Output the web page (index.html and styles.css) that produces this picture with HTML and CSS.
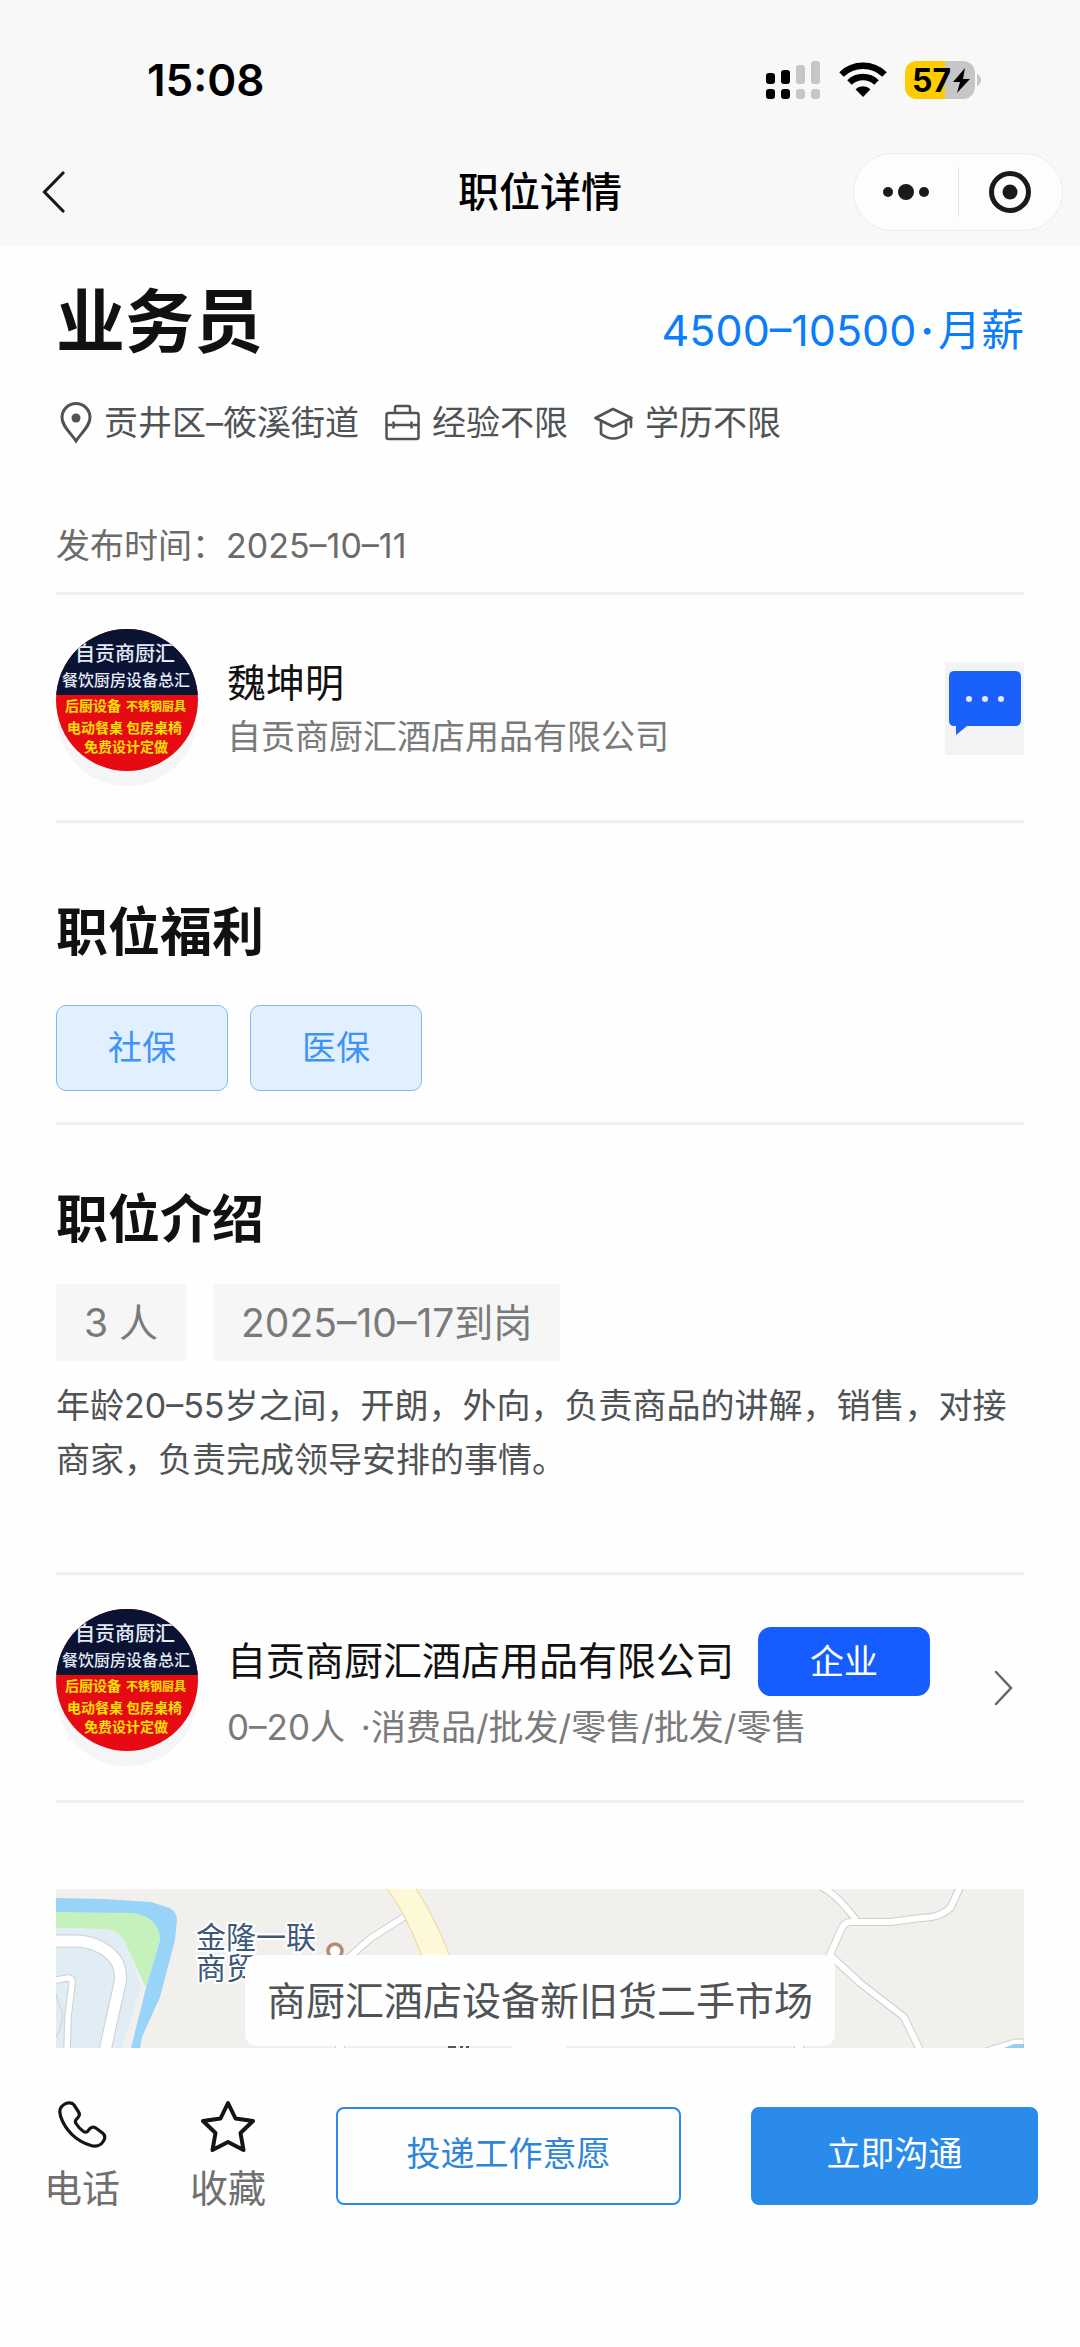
FILE: index.html
```html
<!DOCTYPE html>
<html lang="zh-CN">
<head>
<meta charset="utf-8">
<meta name="viewport" content="width=device-width, initial-scale=1">
<title>职位详情</title>
<link rel="stylesheet" href="styles.css">
</head>
<body>
<svg class="defs" width="0" height="0" aria-hidden="true">
  <symbol id="shop-logo" viewBox="0 0 142 142">
    <clipPath id="disc"><circle cx="71" cy="71" r="71"/></clipPath>
    <g clip-path="url(#disc)">
      <rect width="142" height="142" fill="#e60b12"/>
      <rect width="142" height="66" fill="#0b1334"/>
      <g fill="#e4ebf7" font-weight="500">
        <text x="19" y="32" font-size="20">自贡商厨汇</text>
        <text x="6" y="57" font-size="16">餐饮厨房设备总汇</text>
      </g>
      <g fill="#ffe200" font-size="14" font-weight="700">
        <text x="9" y="82">后厨设备</text>
        <text x="70" y="82" font-size="12">不锈钢厨具</text>
        <text x="11" y="104">电动餐桌</text>
        <text x="70" y="104">包房桌椅</text>
        <text x="28" y="123">免费设计定做</text>
      </g>
    </g>
  </symbol>
</svg>
<div class="page">
  <header class="top">
    <div class="status">
      <span class="clock">15:08</span>
      <div class="status-icons">
        <svg width="55" height="38" viewBox="0 0 55 38" aria-hidden="true">
          <g fill="#000"><rect x="0" y="12" width="9" height="11" rx="3"/><rect x="15" y="9" width="9" height="14" rx="3"/><rect x="0" y="28" width="9" height="10" rx="3"/><rect x="15" y="28" width="9" height="10" rx="3"/></g>
          <g fill="#c6c6c6"><rect x="30" y="4" width="9" height="19" rx="3"/><rect x="45" y="0" width="9" height="23" rx="3"/><rect x="30" y="28" width="9" height="10" rx="3"/><rect x="45" y="28" width="9" height="10" rx="3"/></g>
        </svg>
        <svg width="48" height="36" viewBox="0 0 48 36" aria-hidden="true">
          <g fill="none" stroke="#000" stroke-width="6.5"><path d="M2.5 12.5a31 31 0 0 1 43 0"/><path d="M10.500 20.500a19.500 19.500 0 0 1 27 0"/></g>
          <path d="M24 35l7.500-7.800a10.800 10.800 0 0 0-15 0z"/>
        </svg>
        <svg width="76" height="38" viewBox="0 0 76 38" role="img" aria-label="电量 57%">
          <clipPath id="cell"><rect width="70" height="38" rx="12"/></clipPath>
          <g clip-path="url(#cell)"><rect width="70" height="38" fill="#c6c6c6"/><rect width="40" height="38" fill="#fc0"/></g>
          <path d="M72 13q4 2 4 6t-4 6z" fill="#c6c6c6"/>
          <text class="battery-text" x="7" y="31">57</text>
          <path d="M60 7L48 21h7l-3 11 13-14h-7z"/>
        </svg>
      </div>
    </div>
    <nav class="nav">
      <button class="back" aria-label="返回">
        <svg width="24" height="42" viewBox="0 0 24 42" fill="none" stroke="#1a1a1a" stroke-width="3.200" stroke-linecap="round"><path d="M21 2L2.500 21 21 40"/></svg>
      </button>
      <h1 class="nav-title">职位详情</h1>
      <div class="capsule">
        <button class="capsule-btn" aria-label="更多">
          <svg width="48" height="20" viewBox="0 0 48 20" fill="#1a1a1a"><circle cx="6" cy="10" r="5"/><circle cx="24" cy="10" r="8"/><circle cx="42" cy="10" r="5"/></svg>
        </button>
        <button class="capsule-btn" aria-label="关闭">
          <svg width="44" height="44" viewBox="0 0 44 44"><circle cx="22" cy="22" r="18.500" fill="none" stroke="#1a1a1a" stroke-width="5"/><circle cx="22" cy="22" r="7.500" fill="#1a1a1a"/></svg>
        </button>
      </div>
    </nav>
  </header>

  <main class="content">
    <section class="summary">
      <div class="job-head">
        <h2 class="job-title">业务员</h2>
        <span class="salary">4500–10500<b class="dot">·</b>月薪</span>
      </div>
      <ul class="facts">
        <li>
          <svg width="32" height="42" viewBox="0 0 32 42" fill="none" stroke="#4f5355" stroke-width="3"><path d="M16 39C10 30 2 24 2 15.500a14 14 0 0 1 28 0C30 24 22 30 16 39z"/><circle cx="16" cy="16" r="4.500" fill="#4f5355" stroke="none"/></svg>
          <span>贡井区–筱溪街道</span>
        </li>
        <li>
          <svg width="35" height="42" viewBox="0 0 35 42" fill="none" stroke="#4f5355" stroke-width="2.500"><rect x="1.500" y="11" width="32" height="26" rx="2"/><path d="M10 11V6q0-2 2-2h11q2 0 2 2v5M1.500 23H7m2.500 0h16m2.500 0h5.500M8.500 19.500v7m18-7v7"/></svg>
          <span>经验不限</span>
        </li>
        <li>
          <svg width="39" height="42" viewBox="0 0 39 42" fill="none" stroke="#4f5355" stroke-width="2.600" stroke-linejoin="round" stroke-linecap="round"><path d="M1.500 16L19 7l18.500 9L19 24.500zM7 19v13q12 9 25 0V19M37 16v9"/></svg>
          <span>学历不限</span>
        </li>
      </ul>
      <p class="published">发布时间：<time>2025–10–11</time></p>
    </section>

    <section class="person">
      <svg class="avatar" width="142" height="158" viewBox="0 0 142 158" role="img" aria-label="商家头像"><circle cx="71" cy="87" r="70" fill="#f3f5f6"/><use href="#shop-logo" width="142" height="142"/></svg>
      <div class="person-text">
        <h3 class="name">魏坤明</h3>
        <p class="sub">自贡商厨汇酒店用品有限公司</p>
      </div>
      <button class="chat" aria-label="聊天">
        <svg width="79" height="93" viewBox="0 0 79 93"><path d="M9 9h61q6 0 6 6v43q0 6-6 6H22L11 73V64H9q-5 0-5-6V15q0-6 5-6z" fill="#1a60fb"/><g fill="#e3ecff"><circle cx="24" cy="37" r="3"/><circle cx="40" cy="37" r="3"/><circle cx="56" cy="37" r="3"/></g></svg>
      </button>
    </section>

    <section class="benefits">
      <h2 class="heading">职位福利</h2>
      <ul class="tags"><li>社保</li><li>医保</li></ul>
    </section>

    <section class="intro">
      <h2 class="heading">职位介绍</h2>
      <ul class="chips"><li>3 人</li><li>2025–10–17到岗</li></ul>
      <p class="description">年龄20–55岁之间，开朗，外向，负责商品的讲解，销售，对接商家，负责完成领导安排的事情。</p>
    </section>

    <a class="person" href="#company">
      <svg class="avatar" width="142" height="158" viewBox="0 0 142 158" role="img" aria-label="公司头像"><circle cx="71" cy="87" r="70" fill="#f3f5f6"/><use href="#shop-logo" width="142" height="142"/></svg>
      <div class="person-text">
        <div class="company-row"><h3 class="name">自贡商厨汇酒店用品有限公司</h3><span class="badge">企业</span></div>
        <p class="sub company-sub"><span class="headcount">0–20人</span> ·消费品/批发/零售/批发/零售</p>
      </div>
      <svg class="arrow" width="20" height="36" viewBox="0 0 20 36" fill="none" stroke="#666" stroke-width="2.500" stroke-linecap="round"><path d="M2 2l15 16L2 34"/></svg>
    </a>

    <section class="map" aria-label="工作地点">
      <svg class="map-art" viewBox="0 0 968 159" preserveAspectRatio="xMidYMid slice">
        <rect width="968" height="159" fill="#f1f0ed"/>
        <path d="M0 23H78Q103 25 104 50L90 99 71 58Q64 40 47 40L0 39z" fill="#c5f1bd"/>
        <path d="M0 39l47 1Q64 40 71 58l14 38-19 63H0z" fill="#e0edf5"/>
        <path d="M0 9l47 1 48 3 19 6q7 5 7 12l-2 20-15 57-18 40-2 11H75l15-60 14-48q0-22-26-27L0 23z" fill="#98d4f8"/>
        <g fill="none" stroke="#cfcfcf" stroke-linejoin="round">
          <path d="M0 104q2 12 6 18 2 14-6 26"/>
          <path d="M0 52h22q24 2 37 18 7 10 5 24l-9 40-6 28" stroke-width="13"/>
          <path d="M0 91l12-2q5 0 4 6l-4 33-1 34" stroke-width="7.500"/>
          <path d="M348 28l-33 21-24 21" stroke-width="8"/>
          <path d="M766-2q16 9 34 33" stroke-width="8"/>
          <path d="M904-2l-9 20q-10 11-31 11l-29 4h-40q-7 0-10 8l-12 27" stroke-width="8"/>
          <path d="M774 66l30 28 44 34 16 33" stroke-width="8"/>
          <path d="M284 150v12M743 150v12" stroke-width="10"/>
        </g>
        <g fill="none" stroke="#fff" stroke-linejoin="round">
          <path d="M0 52h22q24 2 37 18 7 10 5 24l-9 40-6 28" stroke-width="11"/>
          <path d="M0 91l12-2q5 0 4 6l-4 33-1 34" stroke-width="5.500"/>
          <path d="M348 28l-33 21-24 21" stroke-width="6"/>
          <path d="M766-2q16 9 34 33" stroke-width="6"/>
          <path d="M904-2l-9 20q-10 11-31 11l-29 4h-40q-7 0-10 8l-12 27" stroke-width="6"/>
          <path d="M774 66l30 28 44 34 16 33" stroke-width="6"/>
          <path d="M284 150v12M743 150v12" stroke-width="8"/>
        </g>
        <path d="M330-2q22 30 36 70h28Q382 34 359-2z" fill="#fcf8d8" stroke="#f3d38e"/>
        <path d="M926 160l33-10h9v9z" fill="#fff" stroke="#ccc"/>
        <path d="M948 159l10-4h10v4z" fill="#98cdee"/>
        <path d="M456 159h54v-3h-54z" fill="#fff"/>
        <path d="M392 158h8m4 0h3m3 0h3" stroke="#555" stroke-width="2"/>
        <circle cx="279" cy="62" r="7" fill="#fff" stroke="#b48a78" stroke-width="3.500"/>
        <g class="map-label"><text x="140" y="59">金隆一联</text><text x="140" y="90">商贸</text></g>
      </svg>
      <p class="callout">商厨汇酒店设备新旧货二手市场</p>
    </section>
  </main>

  <footer class="actions">
    <button class="icon-action">
      <svg width="54" height="52" viewBox="0 0 54 52" fill="none" stroke="#151515" stroke-width="3.200" stroke-linejoin="round"><path d="M9 4.500C5 7 4 11 5.500 16 10 30 21 41 36 45.500c5 1.500 10 0 12.500-4.500 2-3 1.500-6-1-8l-6-4.500c-2.500-2-5-1.500-7 .5l-2 2.500c-1.500 1.200-2.500 1-4 0C25 29 22.500 26 21 23.500c-1-1.500-.8-2.800.2-4l1.800-2c1.700-2 1.700-4 .3-6l-4.300-6.500c-1.500-2.500-6.500-3-10-.5z"/></svg>
      <span>电话</span>
    </button>
    <button class="icon-action">
      <svg width="54" height="52" viewBox="0 0 54 52" fill="none" stroke="#151515" stroke-width="4" stroke-linejoin="round"><path d="M27 3l7.500 15.500L52 21 39.500 33l3 17L27 42l-15.500 8 3-17L2 21l17.500-2.500z"/></svg>
      <span>收藏</span>
    </button>
    <button class="btn btn-outline">投递工作意愿</button>
    <button class="btn btn-primary">立即沟通</button>
  </footer>
</div>
</body>
</html>
```

FILE: styles.css
```css
* { box-sizing: border-box; margin: 0; padding: 0; }

body {
  background: #fefefe;
  color: #4f5355;
  font-family: Inter, "Noto Sans CJK SC", sans-serif;
  font-size: 34px;
  line-height: 48px;
}

button {
  border: 0;
  background: none;
  color: inherit;
  font: inherit;
  cursor: pointer;
}

ul { list-style: none; }
a { color: inherit; text-decoration: none; }
svg { display: block; flex: none; }
.defs { position: absolute; }

.page {
  display: flex;
  flex-direction: column;
  min-height: 100vh;
}

/* Status bar and navigation */
.top { background: #f8f8f8; }

.status {
  display: flex;
  align-items: center;
  justify-content: space-between;
  padding: 56px 99px 34px 147px;
}

.clock {
  color: #000;
  font-size: 44px;
  font-weight: 600;
}

.status-icons {
  display: flex;
  align-items: center;
  gap: 18px;
}

.battery-text {
  font-size: 32px;
  font-weight: 700;
}

.nav {
  display: grid;
  grid-template-columns: 1fr auto 1fr;
  align-items: center;
  height: 108px;
}

.back {
  justify-self: start;
  padding: 12px 0 12px 42px;
}

.nav-title {
  color: #000;
  font-size: 41px;
  font-weight: 500;
}

.capsule {
  display: flex;
  align-items: center;
  justify-self: end;
  width: 210px;
  height: 78px;
  margin-right: 17px;
  border: 1px solid #ececec;
  border-radius: 39px;
  background: #fdfdfd;
}

.capsule-btn {
  display: flex;
  flex: 1;
  align-items: center;
  justify-content: center;
  height: 50px;
}

.capsule-btn + .capsule-btn { border-left: 1px solid #e2e2e2; }

/* Job summary */
.content { padding: 36px 56px 0; }

.summary,
.person,
.benefits,
.intro { border-bottom: 3px solid #f0f0f0; }

.summary { padding-bottom: 22px; }

.job-head {
  display: flex;
  align-items: flex-end;
  justify-content: space-between;
}

.job-title {
  color: #111;
  font-size: 69px;
  font-weight: 700;
  line-height: 80px;
}

.salary {
  color: #0b7dfa;
  font-size: 43px;
  line-height: 64px;
}

.dot {
  margin: 0 4px;
  font-weight: 600;
}

.facts {
  display: flex;
  flex-wrap: wrap;
  gap: 26px;
  margin-top: 37px;
}

.facts li {
  display: flex;
  align-items: center;
  gap: 12px;
}

.facts li:first-child { padding-left: 4px; }

.published {
  margin-top: 75px;
  color: #6b6b6b;
}

/* Recruiter and company rows */
.person {
  display: flex;
  align-items: center;
  gap: 29px;
  padding: 34px 0 33px;
}

.person-text {
  flex: 1;
  padding-top: 4px;
}

.name {
  color: #111;
  font-size: 39px;
  font-weight: 400;
  line-height: 54px;
}

.sub {
  color: #7a7a7a;
  line-height: 54px;
}

.chat { background: #f2f3f5; }

.company-row {
  display: flex;
  align-items: center;
  gap: 24px;
}

.company-sub {
  margin-top: 4px;
  font-size: 35px;
}

.headcount { margin-right: 6px; }

.badge {
  flex: none;
  width: 172px;
  border-radius: 13px;
  background: #165dff;
  color: #fff;
  line-height: 69px;
  text-align: center;
}

.arrow { margin-right: 10px; }

/* Benefits and description */
.benefits { padding: 78px 0 31px; }
.intro { padding: 63px 0 85px; }

.heading {
  color: #111;
  font-size: 52px;
  font-weight: 700;
  line-height: 64px;
}

.tags {
  display: flex;
  gap: 22px;
  margin-top: 40px;
}

.tags li {
  width: 172px;
  border: 1px solid #7fb9f3;
  border-radius: 10px;
  background: #e1efff;
  color: #3c93f8;
  line-height: 84px;
  text-align: center;
}

.chips {
  display: flex;
  gap: 27px;
  margin-top: 32px;
}

.chips li {
  padding: 0 28px;
  border-radius: 3px;
  background: #f6f6f6;
  color: #7a7a7a;
  font-size: 39px;
  line-height: 77px;
}

.description {
  margin-top: 18px;
  line-height: 54px;
}

/* Map */
.map {
  position: relative;
  height: 159px;
  margin-top: 86px;
  overflow: hidden;
}

.map-art {
  width: 100%;
  height: 100%;
}

.map-label {
  fill: #3e5878;
  stroke: #fff;
  stroke-width: 4px;
  paint-order: stroke;
  font-size: 30px;
}

.callout {
  position: absolute;
  top: 66px;
  left: 50%;
  padding: 0 22px;
  border-radius: 12px;
  background: #fefefe;
  font-size: 39px;
  line-height: 91px;
  white-space: nowrap;
  transform: translateX(-50%);
}

/* Bottom actions */
.actions {
  display: flex;
  align-items: center;
  gap: 70px;
  padding: 52px 42px 40px 44px;
}

.icon-action {
  display: flex;
  flex-direction: column;
  align-items: center;
  gap: 12px;
  color: #707070;
  font-size: 38px;
}

.btn {
  height: 98px;
  padding-bottom: 4px;
  border: 2px solid #2a8bea;
  border-radius: 8px;
}

.btn-outline {
  flex: 346;
  color: #2f86d8;
}

.btn-primary {
  flex: 287;
  background: #2a8bea;
  color: #fff;
}
```
